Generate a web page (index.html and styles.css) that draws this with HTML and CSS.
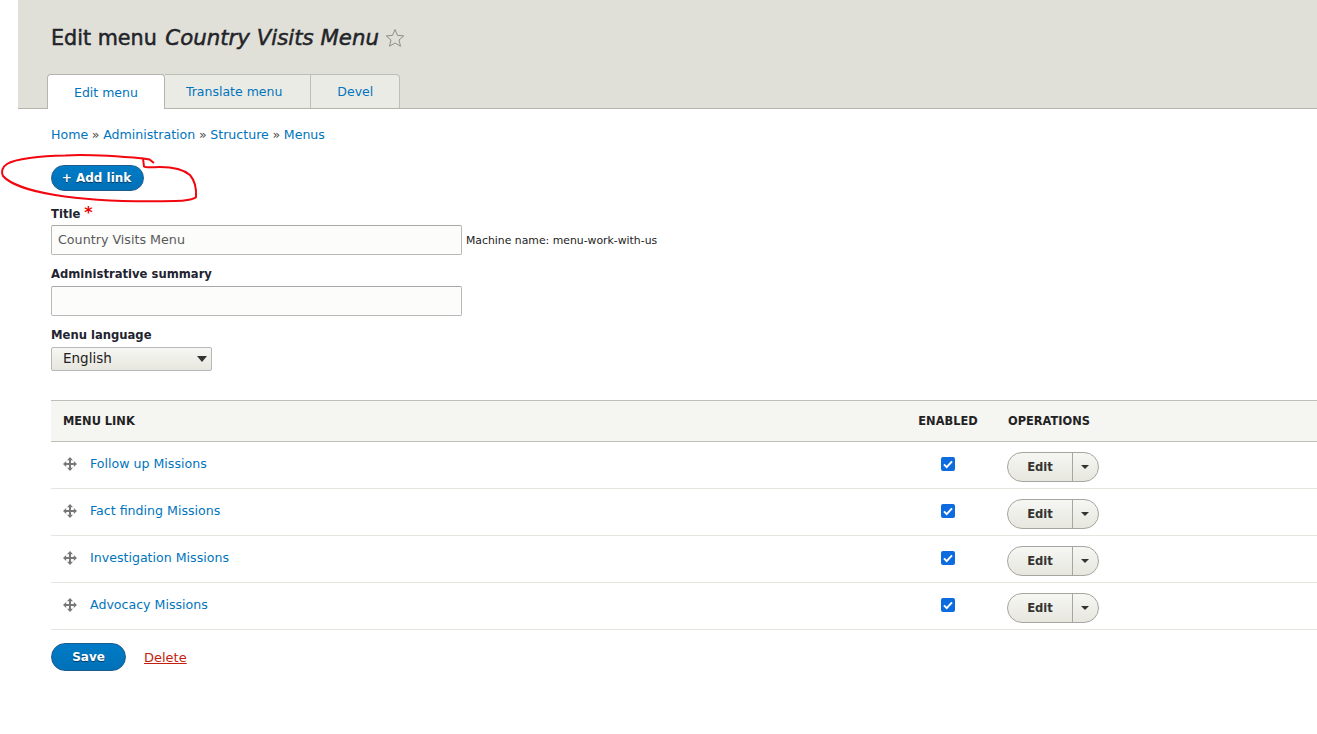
FILE: index.html
```html
<!DOCTYPE html>
<html lang="en">
<head>
  <meta charset="UTF-8">
  <meta name="viewport" content="width=device-width, initial-scale=1">
  <title>Edit menu Country Visits Menu</title>
  <link rel="stylesheet" href="styles.css">
</head>
<body>
  <div class="page">
    <!-- Header with tabs -->
    <header class="page-head">
      <h1 class="page-title">Edit menu <em>Country Visits Menu</em>
        <svg class="star" width="20" height="20" viewBox="0 0 20 20"><path d="M10 1.5l2.5 5.9 6.3.5-4.8 4.1 1.5 6.2L10 15l-5.500 3.200L6 12 1.200 7.900l6.300-.5z" fill="none" stroke="#8e8e84" stroke-width="1"/></svg>
      </h1>
      <ul class="tabs">
        <li class="tab tab-active"><a href="#">Edit menu</a></li>
        <li class="tab tab-second"><a href="#">Translate menu</a></li>
        <li class="tab"><a href="#">Devel</a></li>
      </ul>
    </header>

    <main class="content">
      <nav class="breadcrumb">
        <a href="#">Home</a> <span class="sep">»</span> <a href="#">Administration</a> <span class="sep">»</span> <a href="#">Structure</a> <span class="sep">»</span> <a href="#">Menus</a>
      </nav>

      <div class="actions">
        <a class="btn-primary btn-small" href="#">+ Add link</a>
      </div>

      <form>
        <div class="field field-title">
          <label class="label">Title <span class="required">*</span></label>
          <div class="input-row">
            <input class="text-input" type="text" value="Country Visits Menu">
            <small class="machine-name">Machine name: menu-work-with-us</small>
          </div>
        </div>
        <div class="field">
          <label class="label">Administrative summary</label>
          <input class="text-input" type="text">
        </div>
        <div class="field">
          <label class="label">Menu language</label>
          <div class="select-box">English<span class="select-arrow"></span></div>
        </div>

        <table class="menu-table">
          <thead>
            <tr>
              <th class="col-link">Menu link</th>
              <th class="col-enabled">Enabled</th>
              <th class="col-ops">Operations</th>
            </tr>
          </thead>
          <tbody>
            <tr>
              <td class="col-link"><svg class="drag" width="16" height="16" viewBox="0 0 16 16"><path d="M8 1l3 3.200H9V7h2.800V5L15 8l-3.200 3V9H9v2.800h2L8 15l-3-3.200h2V9H4.200v2L1 8l3.200-3v2H7V4.200H5z" fill="#787878"/></svg><a href="#">Follow up Missions</a></td>
              <td class="col-enabled"><span class="check"><svg width="14" height="14" viewBox="0 0 14 14"><path d="M3 7.400l2.700 2.700L11 4.400" fill="none" stroke="#fff" stroke-width="2"/></svg></span></td>
              <td class="col-ops"><div class="dropbutton"><span class="drop-main">Edit</span><span class="drop-toggle"><i></i></span></div></td>
            </tr>
            <tr>
              <td class="col-link"><svg class="drag" width="16" height="16" viewBox="0 0 16 16"><path d="M8 1l3 3.200H9V7h2.800V5L15 8l-3.200 3V9H9v2.800h2L8 15l-3-3.200h2V9H4.200v2L1 8l3.200-3v2H7V4.200H5z" fill="#787878"/></svg><a href="#">Fact finding Missions</a></td>
              <td class="col-enabled"><span class="check"><svg width="14" height="14" viewBox="0 0 14 14"><path d="M3 7.400l2.700 2.700L11 4.400" fill="none" stroke="#fff" stroke-width="2"/></svg></span></td>
              <td class="col-ops"><div class="dropbutton"><span class="drop-main">Edit</span><span class="drop-toggle"><i></i></span></div></td>
            </tr>
            <tr>
              <td class="col-link"><svg class="drag" width="16" height="16" viewBox="0 0 16 16"><path d="M8 1l3 3.200H9V7h2.800V5L15 8l-3.200 3V9H9v2.800h2L8 15l-3-3.200h2V9H4.200v2L1 8l3.200-3v2H7V4.200H5z" fill="#787878"/></svg><a href="#">Investigation Missions</a></td>
              <td class="col-enabled"><span class="check"><svg width="14" height="14" viewBox="0 0 14 14"><path d="M3 7.400l2.700 2.700L11 4.400" fill="none" stroke="#fff" stroke-width="2"/></svg></span></td>
              <td class="col-ops"><div class="dropbutton"><span class="drop-main">Edit</span><span class="drop-toggle"><i></i></span></div></td>
            </tr>
            <tr>
              <td class="col-link"><svg class="drag" width="16" height="16" viewBox="0 0 16 16"><path d="M8 1l3 3.200H9V7h2.800V5L15 8l-3.200 3V9H9v2.800h2L8 15l-3-3.200h2V9H4.200v2L1 8l3.200-3v2H7V4.200H5z" fill="#787878"/></svg><a href="#">Advocacy Missions</a></td>
              <td class="col-enabled"><span class="check"><svg width="14" height="14" viewBox="0 0 14 14"><path d="M3 7.400l2.700 2.700L11 4.400" fill="none" stroke="#fff" stroke-width="2"/></svg></span></td>
              <td class="col-ops"><div class="dropbutton"><span class="drop-main">Edit</span><span class="drop-toggle"><i></i></span></div></td>
            </tr>
          </tbody>
        </table>

        <div class="form-actions">
          <a class="btn-primary btn-save" href="#">Save</a>
          <a class="delete-link" href="#">Delete</a>
        </div>
      </form>
    </main>
  </div>

  <!-- Red pen annotation drawn over the screenshot -->
  <svg class="scribble" width="210" height="60" viewBox="0 0 210 60">
    <path d="M143 8.500C120 6.500 90 4 65 5.500C40 6 15 9 7 14C2 17 1 22 3 26C10 34 30 41 55 45C85 50 130 52 175 51C185 51 195 49 196 47C196.500 40 195 31 190 25C183 19 170 17 160 17C153 17 146 18 144 16.500L143 8.500L149.500 9.500L154 13" fill="none" stroke="#f2070f" stroke-width="2"/>
  </svg>
</body>
</html>
```

FILE: styles.css
```css
/* General */
body {
  margin: 0;
  background: #fff;
  color: #222330;
  font-family: "DejaVu Sans", Verdana, sans-serif;
  font-size: 12px;
}
a {
  color: #0074bd;
  text-decoration: none;
}
.page {
  padding-left: 18px;
}
/* Header */
.page-head {
  height: 108px;
  background: #e0e0d8;
  border-bottom: 1px solid #b5b5ad;
  display: flex;
  flex-direction: column;
  justify-content: space-between;
  padding-left: 29px;
}
.page-title {
  margin: 23px 0 0 4px;
  font-size: 20.7px;
  line-height: 30px;
  font-weight: normal;
  color: #232429;
  -webkit-text-stroke: 0.5px #232429;
  display: flex;
  align-items: center;
  white-space: pre;
}
.page-title em {
  margin-left: 2px;
  font-size: 21.3px;
}
.star {
  margin-left: 6px;
}
/* Tabs */
.tabs {
  display: flex;
  list-style: none;
  margin: 0;
  padding: 0;
  font-size: 12.5px;
}
.tab {
  height: 33px;
  margin-bottom: -1px;
  background: #ebebe5;
  border: 1px solid #bfbfba;
  border-left: 0;
  border-bottom: 0;
  border-radius: 0 4px 0 0;
  display: flex;
  align-items: center;
  justify-content: center;
  padding: 0 26px;
}
.tab-second {
  border-radius: 0;
  padding: 0 28px 0 21px;
}
.tab-active {
  height: 34px;
  background: #fff;
  border: 1px solid #b5b5ad;
  border-bottom: 0;
  border-radius: 4px 4px 0 0;
  padding: 0 26px;
}
/* Content */
.content {
  padding-left: 33px;
}
.breadcrumb {
  margin-top: 18px;
  line-height: 16px;
  font-size: 12.6px;
  word-spacing: -0.4px;
  color: #555;
}
.sep {
  color: #4c4c4c;
}
.actions {
  margin-top: 22px;
  height: 26px;
}
.btn-primary {
  display: inline-block;
  box-sizing: border-box;
  border: 1px solid #1e5c90;
  border-radius: 20px;
  background: linear-gradient(to bottom, #007bc6, #0071b8);
  color: #fff;
  font-weight: bold;
  text-align: center;
  text-shadow: 0 1px 1px rgba(0,0,0,0.5);
}
.btn-small {
  width: 93px;
  height: 26px;
  line-height: 24px;
  padding-right: 2px;
}
/* Form */
.field {
  margin-bottom: 10px;
}
.field-title {
  margin-top: 14px;
}
.label {
  display: block;
  font-weight: bold;
  font-size: 11.6px;
  line-height: 18px;
  margin-bottom: 3px;
}
.field-title .label {
  margin-bottom: 2px;
}
.required {
  color: #e00;
  font-size: 16px;
  line-height: 12px;
}
.input-row {
  display: flex;
  align-items: center;
}
.text-input {
  box-sizing: border-box;
  display: block;
  width: 411px;
  height: 30px;
  padding: 0 6px 2px;
  border: 1px solid #b8b8b8;
  border-top-color: #a8a8a8;
  border-radius: 2px;
  background: #fcfcfa;
  color: #595959;
  font: 12.7px "DejaVu Sans", Verdana, sans-serif;
}
.machine-name {
  margin-left: 4px;
  font-size: 10.85px;
  color: #222;
}
.select-box {
  position: relative;
  box-sizing: border-box;
  width: 161px;
  height: 24px;
  line-height: 21px;
  padding-left: 11px;
  border: 1px solid #b8b8b8;
  border-radius: 2px;
  background: linear-gradient(to bottom, #f6f6f3, #e7e7df);
  font-size: 13.5px;
  color: #222;
}
.select-arrow {
  position: absolute;
  right: 4px;
  top: 8px;
  border: 5px solid transparent;
  border-top: 6px solid #333;
  border-bottom: 0;
}
/* Table */
.menu-table {
  width: 100%;
  margin-top: 29px;
  border-collapse: collapse;
}
.menu-table th {
  height: 40px;
  padding: 0;
  background: #f5f5f2;
  border-top: 1px solid #bfbfba;
  border-bottom: 1px solid #bfbfba;
  font-size: 11.4px;
  text-transform: uppercase;
  text-align: left;
  color: #222;
}
.menu-table td {
  padding: 0;
  vertical-align: top;
  border-bottom: 1px solid #e6e4df;
}
.menu-table th.col-link {
  padding-left: 12px;
}
.menu-table td.col-link {
  height: 32px;
  padding: 14px 0 0 11px;
  font-size: 12.6px;
  line-height: 16px;
}
.menu-table .col-enabled {
  width: 118px;
  text-align: center;
}
.menu-table td.col-enabled {
  padding-top: 15px;
  line-height: 14px;
}
.menu-table th.col-ops {
  width: 309px;
  padding-left: 1px;
}
.menu-table td.col-ops {
  width: 310px;
  padding-top: 10px;
}
.drag {
  vertical-align: top;
  margin-right: 12px;
}
.check {
  display: inline-flex;
  width: 14px;
  height: 14px;
  background: #0d6be0;
  border-radius: 2px;
  vertical-align: top;
}
.dropbutton {
  display: flex;
  box-sizing: border-box;
  width: 92px;
  height: 30px;
  border: 1px solid #a6a6a0;
  border-radius: 15px;
  background: linear-gradient(to bottom, #f6f6f3, #e7e7df);
  font-weight: bold;
  font-size: 11.6px;
  color: #333;
}
.drop-main {
  flex: 1;
  line-height: 28px;
  text-align: center;
  border-right: 1px solid #a6a6a0;
}
.drop-toggle {
  width: 25px;
  display: flex;
  align-items: center;
  justify-content: center;
  padding-right: 2px;
  box-sizing: border-box;
}
.drop-toggle i {
  border: 4px solid transparent;
  border-top: 4px solid #333;
  border-bottom: 0;
}
.form-actions {
  display: flex;
  align-items: center;
  margin-top: 13px;
}
.btn-save {
  width: 75px;
  height: 28px;
  line-height: 26px;
}
.delete-link {
  margin-left: 18px;
  color: #c41e0f;
  text-decoration: underline;
  font-size: 13px;
}
/* Annotation */
.scribble {
  position: absolute;
  left: 0;
  top: 150px;
}
```
